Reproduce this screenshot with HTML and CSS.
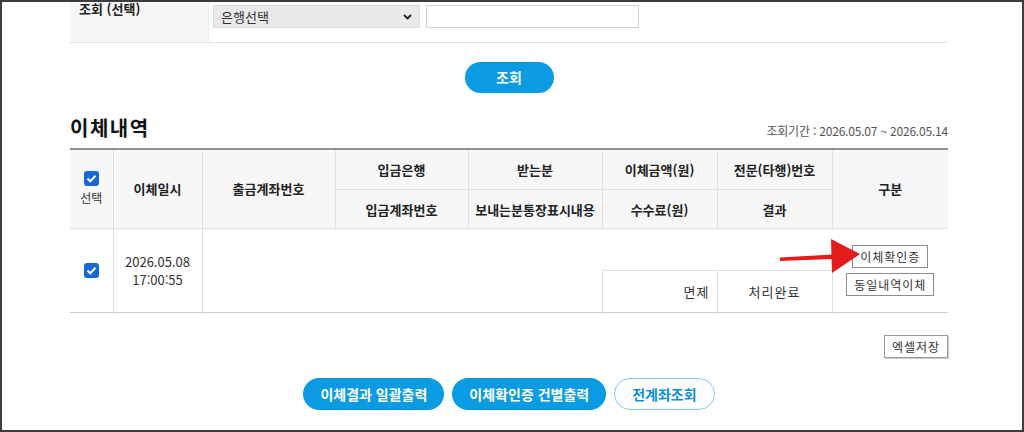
FILE: index.html
```html
<!DOCTYPE html>
<html lang="ko">
<head>
    <meta charset="UTF-8">
    <meta name="viewport" content="width=device-width, initial-scale=1.0">
    <title>이체내역 조회</title>
    <link rel="stylesheet" href="styles.css">
</head>
<body>
    <div class="frame">
        <div class="container">

            <!-- 조회 조건 -->
            <table class="search-table">
                <tr>
                    <th>조회 (선택)</th>
                    <td>
                        <div class="search-fields">
                            <div class="select">
                                <span>은행선택</span>
                                <svg width="9" height="6" viewBox="0 0 9 6"><path d="M1 1l3.5 3.5L8 1" fill="none" stroke="#222" stroke-width="1.8"/></svg>
                            </div>
                            <div class="text-input"></div>
                        </div>
                    </td>
                </tr>
            </table>

            <div class="search-btn-row">
                <button type="button" class="btn-pill btn-search">조회</button>
            </div>

            <!-- 이체내역 -->
            <div class="title-row">
                <h2>이체내역</h2>
                <span class="period">조회기간 : 2026.05.07 ~ 2026.05.14</span>
            </div>

            <div class="list-wrap">
                <table class="list-table">
                    <colgroup>
                        <col style="width:43px">
                        <col style="width:89px">
                        <col style="width:133px">
                        <col style="width:133px">
                        <col style="width:134px">
                        <col style="width:115px">
                        <col style="width:115px">
                        <col style="width:116px">
                    </colgroup>
                    <thead>
                        <tr class="head-1">
                            <th rowspan="2" class="col-check">
                                <span class="checkbox"><svg width="11" height="9" viewBox="0 0 11 9"><path d="M1.5 4.5l2.8 2.8L9.5 1.8" fill="none" stroke="#fff" stroke-width="2"/></svg></span>
                                <span class="check-label">선택</span>
                            </th>
                            <th rowspan="2">이체일시</th>
                            <th rowspan="2">출금계좌번호</th>
                            <th>입금은행</th>
                            <th>받는분</th>
                            <th>이체금액(원)</th>
                            <th>전문(타행)번호</th>
                            <th rowspan="2" class="last">구분</th>
                        </tr>
                        <tr class="head-2">
                            <th>입금계좌번호</th>
                            <th>보내는분통장표시내용</th>
                            <th>수수료(원)</th>
                            <th>결과</th>
                        </tr>
                    </thead>
                    <tbody>
                        <tr class="row-1">
                            <td rowspan="2" class="col-check">
                                <span class="checkbox"><svg width="11" height="9" viewBox="0 0 11 9"><path d="M1.5 4.5l2.8 2.8L9.5 1.8" fill="none" stroke="#fff" stroke-width="2"/></svg></span>
                            </td>
                            <td rowspan="2" class="date">2026.05.08<br>17:00:55</td>
                            <td rowspan="2" class="blank"></td>
                            <td class="blank"></td>
                            <td class="blank"></td>
                            <td class="blank line-bottom"></td>
                            <td class="blank line-bottom"></td>
                            <td rowspan="2" class="last actions">
                                <button type="button" class="btn-box">이체확인증</button>
                                <button type="button" class="btn-box">동일내역이체</button>
                            </td>
                        </tr>
                        <tr class="row-2">
                            <td class="blank"></td>
                            <td class="blank"></td>
                            <td class="fee">면제</td>
                            <td class="result">처리완료</td>
                        </tr>
                    </tbody>
                </table>

                <svg class="pointer" width="84" height="40" viewBox="0 0 84 40">
                    <polygon points="0,19.5 53,16.5 53,21 0,23" fill="#e31b1b"/>
                    <polygon points="51,1 80,16 52,35" fill="#e31b1b"/>
                </svg>
            </div>

            <div class="excel-row">
                <button type="button" class="btn-box btn-excel">엑셀저장</button>
            </div>

            <div class="bottom-btns">
                <button type="button" class="btn-pill">이체결과 일괄출력</button>
                <button type="button" class="btn-pill">이체확인증 건별출력</button>
                <button type="button" class="btn-pill btn-outline">전계좌조회</button>
            </div>
        </div>
    </div>
</body>
</html>
```

FILE: styles.css
```css
body {
    margin: 0;
    font-family: "Noto Sans CJK KR", "Noto Sans", sans-serif;
    color: #333;
    background: #fff;
}
.frame {
    width: 1024px;
    height: 432px;
    box-sizing: border-box;
    border: 2px solid #3c3c3c;
    overflow: hidden;
}
.container {
    width: 878px;
    margin-left: 68px;
}

/* search */
.search-table {
    width: 100%;
    margin-top: -3px;
    border-collapse: collapse;
}
.search-table tr {
    height: 43px;
    border-bottom: 1px solid #e2e2e2;
}
.search-table th {
    width: 129px;
    padding: 0 0 0 9px;
    background: #f7f7f7;
    border-right: 1px solid #ececec;
    text-align: left;
    vertical-align: top;
    font-size: 13px;
    line-height: 20px;
    color: #222;
}
.search-table td {
    padding: 6px 0 0 4px;
    vertical-align: top;
}
.search-fields {
    display: flex;
    gap: 6px;
}
.select {
    width: 207px;
    height: 23px;
    box-sizing: border-box;
    padding: 0 7px;
    background: #e9e9eb;
    border: 1px solid #dcdcdc;
    display: flex;
    align-items: center;
    justify-content: space-between;
    font-size: 13px;
    color: #333;
}
.text-input {
    width: 213px;
    height: 23px;
    box-sizing: border-box;
    border: 1px solid #d4d4d4;
    background: #fff;
}

/* buttons */
.btn-pill {
    height: 32px;
    padding: 0 17px;
    border: none;
    border-radius: 16px;
    background: #0b9be3;
    color: #fff;
    font-family: inherit;
    font-size: 14px;
    font-weight: bold;
    cursor: pointer;
}
.search-btn-row {
    margin-top: 19px;
    display: flex;
    justify-content: center;
}
.btn-search {
    width: 89px;
    height: 31px;
}
.btn-box {
    height: 23px;
    padding: 0 7px;
    border: 1px solid #8c8c8c;
    background: #fff;
    color: #333;
    font-family: inherit;
    font-size: 12px;
    letter-spacing: 1px;
    cursor: pointer;
}

/* title */
.title-row {
    margin-top: 23px;
    margin-bottom: 8px;
    display: flex;
    justify-content: space-between;
    align-items: flex-end;
}
.title-row h2 {
    margin: 0;
    font-size: 20px;
    line-height: 24px;
    letter-spacing: 1.5px;
    color: #111;
}
.period {
    font-size: 12px;
    line-height: 18px;
    color: #555;
    letter-spacing: -0.2px;
}

/* list */
.list-wrap {
    position: relative;
}
.list-table {
    width: 100%;
    table-layout: fixed;
    border-collapse: collapse;
    border-top: 2px solid #8f8f8f;
    border-bottom: 1px solid #cfcfcf;
}
.list-table th,
.list-table td {
    padding: 0;
    text-align: center;
    border-right: 1px solid #e0e0e0;
}
.list-table .last {
    border-right: none;
}
.list-table th {
    background: #f7f7f7;
    font-size: 13px;
    color: #222;
    border-bottom: 1px solid #e0e0e0;
}
.head-1 {
    height: 41px;
}
.head-2 {
    height: 39px;
}
.row-1,
.row-2 {
    height: 42px;
}
.list-table td {
    font-size: 13px;
    color: #333;
}
.checkbox {
    width: 15px;
    height: 15px;
    border-radius: 3px;
    background: #1768d6;
    display: flex;
    align-items: center;
    justify-content: center;
}
.list-table .col-check .checkbox {
    margin: 0 auto;
}
.check-label {
    display: block;
    margin-top: 3px;
    font-size: 12px;
    font-weight: normal;
    color: #333;
}
.date {
    line-height: 18px;
    color: #444;
}
.list-table td.blank {
    border-right: none;
}
.list-table td.line-bottom {
    border-bottom: 1px solid #e0e0e0;
}
.list-table td.fee {
    text-align: right;
    padding-right: 7px;
    letter-spacing: 1px;
    border-left: 1px solid #e0e0e0;
}
.result {
    letter-spacing: 1px;
}
.actions {
    vertical-align: middle;
}
.actions .btn-box {
    display: block;
    margin: 0 auto;
}
.actions .btn-box + .btn-box {
    margin-top: 5px;
}
.pointer {
    position: absolute;
    left: 710px;
    top: 90px;
}

.excel-row {
    margin-top: 22px;
    display: flex;
    justify-content: flex-end;
}
.btn-excel {
    width: 64px;
    padding: 0;
    border-color: #999;
    box-shadow: 1px 1px 0 #ccc;
}

.bottom-btns {
    margin-top: 20px;
    display: flex;
    justify-content: center;
    gap: 8px;
}
.btn-outline {
    background: #fff;
    color: #0a8fd8;
    border: 1px solid #86c8ee;
}
```
